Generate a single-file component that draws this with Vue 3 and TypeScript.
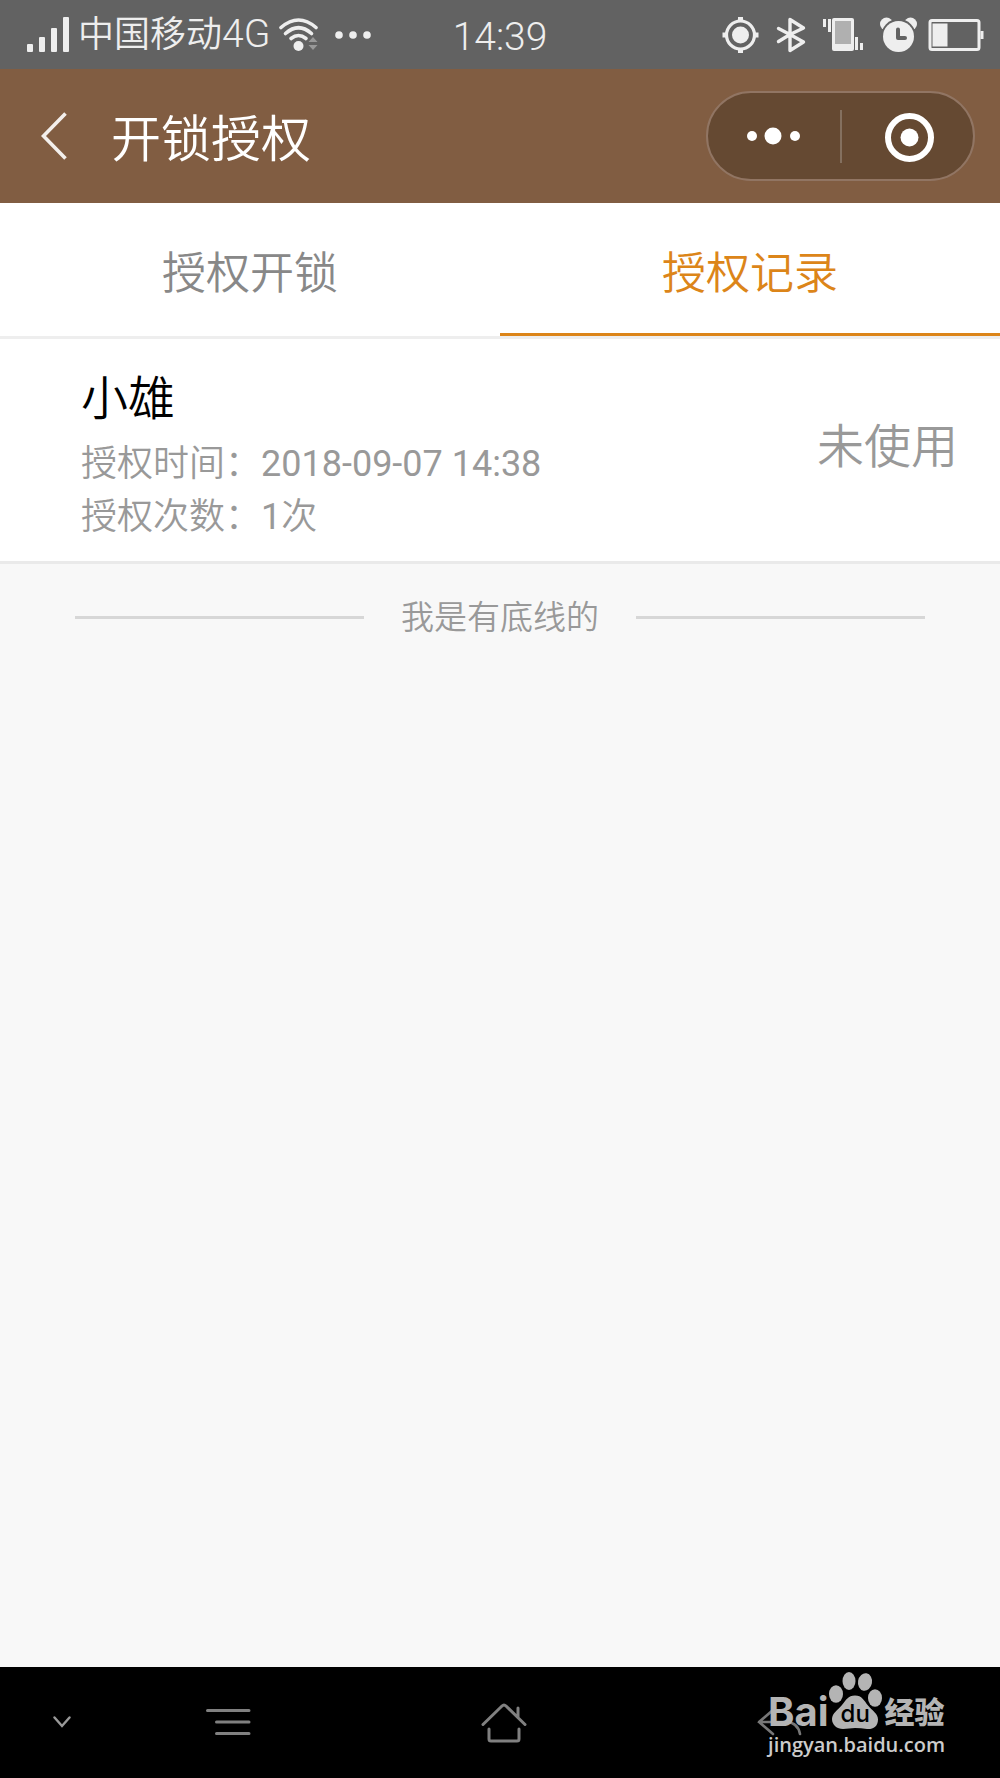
<script setup lang="ts">
import { ref } from 'vue'

interface AuthRecord {
  name: string
  time: string
  count: number
  status: string
}

const tabs: string[] = ['授权开锁', '授权记录']
const activeTab = ref<number>(1)
const records: AuthRecord[] = [
  { name: '小雄', time: '2018-09-07 14:38', count: 1, status: '未使用' },
]
</script>

<template>
  <div class="screen">
    <div class="status-bar">
      <div class="status-left">
        <svg width="44" height="36" viewBox="0 0 44 36" fill="#eee">
          <rect x="1" y="27" width="6" height="8" rx="1" />
          <rect x="13" y="20" width="6" height="15" rx="1" />
          <rect x="25" y="11" width="6" height="24" rx="1" />
          <rect x="37" y="0" width="6" height="35" rx="1" />
        </svg>
        <span class="carrier">中国移动<span class="network">4G</span></span>
        <svg class="wifi" width="40" height="34" viewBox="0 0 40 34" fill="none" stroke="#eee" stroke-width="3.600" stroke-linecap="round">
          <path d="M2 9.500Q19.500 -5.500 37 9.500" />
          <path d="M6.500 15.500Q19.500 4 32.500 15.500" />
          <path d="M12 20.500Q19.500 14.500 27 20.500" />
          <circle cx="19.500" cy="28" r="5" fill="#eee" stroke="none" />
          <path d="M29.500 24l4.500-5 4.500 5zM29.500 27h9l-4.500 5z" fill="#999" stroke="none" />
        </svg>
        <svg width="36" height="36" viewBox="0 0 36 36" fill="#eee">
          <circle cx="4" cy="18" r="3.800" />
          <circle cx="18" cy="18" r="3.800" />
          <circle cx="32" cy="18" r="3.800" />
        </svg>
      </div>
      <time class="clock">14:39</time>
      <div class="status-right">
        <svg width="38" height="36" viewBox="0 0 38 36" fill="#eee">
          <circle cx="18.500" cy="18" r="14" fill="none" stroke="#eee" stroke-width="3.200" />
          <circle cx="18.500" cy="18" r="8.500" />
          <path d="M16 0h5v4h-5zM16 32h5v4h-5zM.5 15.500h4v5h-4zM32.500 15.500h4v5h-4z" />
        </svg>
        <svg width="30" height="36" viewBox="0 0 30 36" fill="none" stroke="#eee" stroke-width="3.400" stroke-linejoin="round" stroke-linecap="round">
          <path d="M2.500 11.500L14 17.500l13.500-6.500L14 2.500v31L27.500 25 14 17.500 2.500 24.500" />
        </svg>
        <svg width="41" height="36" viewBox="0 0 41 36" fill="#eee">
          <rect x="10" y="1" width="22" height="33" rx="2" />
          <rect x="13" y="4" width="16" height="23" fill="#b0b0b0" />
          <path d="M1 2h3v8H1zM6 2h3v13H6zM33 20h3v13h-3zM38 26h3v7h-3z" />
        </svg>
        <svg width="38" height="36" viewBox="0 0 38 36" fill="#eee">
          <circle cx="7.500" cy="7" r="6.500" />
          <circle cx="31.500" cy="7" r="6.500" />
          <circle cx="19.500" cy="19.500" r="17.500" fill="#626262" />
          <circle cx="19.500" cy="19.500" r="15.500" />
          <path d="M19 12.500v8.500h7" fill="none" stroke="#626262" stroke-width="4" stroke-linecap="round" stroke-linejoin="round" />
        </svg>
        <svg width="56" height="32" viewBox="0 0 56 32" fill="#eee">
          <rect x="2" y="1.500" width="49" height="29" rx="2" fill="none" stroke="#eee" stroke-width="3" />
          <rect x="4.500" y="4.500" width="15" height="23" />
          <rect x="52.500" y="12" width="3" height="8" />
        </svg>
      </div>
    </div>

    <header class="app-bar">
      <button class="back" type="button" aria-label="返回">
        <svg width="26" height="48" viewBox="0 0 26 48" fill="none" stroke="#f3efec" stroke-width="3.600">
          <path d="M24.500 1.500L2.500 24l22 22.500" />
        </svg>
      </button>
      <h1>开锁授权</h1>
      <div class="capsule">
        <button type="button" aria-label="更多">
          <svg width="54" height="50" viewBox="0 0 54 50" fill="#fff">
            <circle cx="5" cy="25" r="5" />
            <circle cx="26" cy="25" r="8.500" />
            <circle cx="48" cy="25" r="5" />
          </svg>
        </button>
        <span class="capsule-line"></span>
        <button type="button" aria-label="关闭">
          <svg width="54" height="54" viewBox="0 0 54 54">
            <circle cx="29.500" cy="28.500" r="21.500" fill="none" stroke="#fff" stroke-width="6" />
            <circle cx="29.500" cy="28.500" r="9" fill="#fff" />
          </svg>
        </button>
      </div>
    </header>

    <nav class="tabs">
      <button
        v-for="(tab, i) in tabs"
        :key="tab"
        type="button"
        :class="{ active: activeTab === i }"
        @click="activeTab = i"
      >{{ tab }}</button>
    </nav>

    <main>
      <article v-for="item in records" :key="item.time" class="record">
        <div class="info">
          <h2>{{ item.name }}</h2>
          <p>授权时间：<span class="num">{{ item.time }}</span></p>
          <p>授权次数：<span class="num">{{ item.count }}</span>次</p>
        </div>
        <span class="state">{{ item.status }}</span>
      </article>
      <div class="end"><span>我是有底线的</span></div>
    </main>

    <footer class="nav-bar">
      <button class="hide" type="button" aria-label="收起">
        <svg width="18" height="14" viewBox="0 0 18 14" fill="none" stroke="#999" stroke-width="2.400" stroke-linecap="round">
          <path d="M1.500 1.500L9 10l7.500-8.500" />
        </svg>
      </button>
      <button type="button" aria-label="菜单">
        <svg width="46" height="30" viewBox="0 0 46 30" fill="none" stroke="#808080" stroke-width="3" stroke-linecap="round">
          <path d="M2.500 2.500h41.500M11.500 14h32.500M11.500 25.500h32.500" />
        </svg>
      </button>
      <button type="button" aria-label="主页">
        <svg width="50" height="40" viewBox="0 0 50 40" fill="none" stroke="#808080" stroke-width="3" stroke-linecap="round" stroke-linejoin="round">
          <path d="M4 21.500L23 3q2-2 4 0l19 18.500M39 14V5M10 26v10q0 2 2 2h26q2 0 2-2V26" />
        </svg>
      </button>
      <button type="button" aria-label="后退">
        <svg width="46" height="30" viewBox="0 0 46 30" fill="none" stroke="#777" stroke-width="2.600" stroke-linecap="round">
          <path d="M16 2L2 14l14 12M2 14h28q11 1 13 12" />
        </svg>
      </button>
      <div class="watermark">
        <div class="brand">
          <span class="bai">Bai</span>
          <span class="paw">
            <svg width="54" height="58" viewBox="0 0 54 58" fill="#b4b4b4">
              <ellipse cx="7" cy="22" rx="7" ry="8.800" />
              <ellipse cx="20" cy="9" rx="6.500" ry="9" />
              <ellipse cx="36" cy="10" rx="7" ry="8.800" transform="rotate(10 36 10)" />
              <ellipse cx="46" cy="26" rx="7" ry="8.800" />
              <path d="M26 23.500c7 0 9 5 13 10s10 8 10 14c0 7-5 10-11 9.500-4-.5-8-1-12-1s-8 1-12 1C8 57 3 53 3 47c0-6 6-9 10-14s6-9.500 13-9.500z" />
            </svg>
            <span class="du">du</span>
          </span>
          <span class="exp">经验</span>
        </div>
        <span class="site">jingyan.baidu.com</span>
      </div>
    </footer>
  </div>
</template>

<style>
body {
  margin: 0;
}
</style>

<style scoped>
.screen {
  display: flex;
  flex-direction: column;
  min-height: 100vh;
  background: #f8f8f8;
  font-family: Roboto, "Noto Sans CJK SC", sans-serif;
  font-weight: 350;
}
svg {
  display: block;
  flex: none;
}
button {
  padding: 0;
  border: 0;
  background: none;
  font: inherit;
  color: inherit;
}
h1,
h2,
p {
  margin: 0;
  font-weight: inherit;
}
.status-bar {
  display: grid;
  grid-template-columns: 1fr auto 1fr;
  align-items: center;
  height: 69px;
  background: #626262;
  color: #eee;
}
.status-left {
  display: flex;
  align-items: center;
  padding-left: 26px;
}
.carrier {
  margin: 0 9px 0 8px;
  font-size: 36px;
  line-height: 68px;
}
.network {
  font-size: 39px;
}
.wifi {
  margin-right: 16px;
}
.clock {
  padding-top: 4px;
  font-size: 39px;
  line-height: 44px;
}
.status-right {
  display: flex;
  align-items: center;
  justify-content: flex-end;
  gap: 16px;
  padding-right: 16px;
}
.status-right svg:last-child {
  margin-left: -5px;
}
.app-bar {
  display: flex;
  align-items: center;
  box-sizing: border-box;
  height: 134px;
  padding: 0 25px 0 41px;
  background: #815d42;
  color: #fff;
}
h1 {
  flex: 1;
  margin-left: 44px;
  padding-top: 8px;
  font-size: 50px;
  line-height: 72px;
}
.capsule {
  display: flex;
  align-items: center;
  box-sizing: border-box;
  width: 269px;
  height: 90px;
  border: 2px solid #917563;
  border-radius: 45px;
  background: #654932;
}
.capsule button {
  display: flex;
  flex: 1;
  justify-content: center;
}
.capsule-line {
  width: 2px;
  height: 53px;
  background: #84705f;
}
.tabs {
  display: flex;
  height: 133px;
  border-bottom: 3px solid #eee;
  background: #fff;
  color: #888;
}
.tabs button {
  flex: 1;
  padding-top: 4px;
  border-bottom: 3px solid transparent;
  font-size: 44px;
}
.tabs .active {
  border-bottom-color: #dc8519;
  color: #dc8519;
}
.record {
  display: flex;
  align-items: flex-start;
  justify-content: space-between;
  box-sizing: border-box;
  height: 225px;
  padding: 0 42px 0 81px;
  border-bottom: 3px solid #eaeaea;
  background: #fff;
  color: #999;
}
.info {
  padding-top: 28px;
}
h2 {
  padding-bottom: 7px;
  font-size: 47px;
  line-height: 64px;
  color: #000;
}
p {
  font-size: 36px;
  line-height: 53px;
}
.num {
  font-weight: 400;
}
.state {
  padding-top: 76px;
  font-size: 47px;
  line-height: 64px;
}
.end {
  display: flex;
  align-items: center;
  gap: 37px;
  padding: 29px 75px;
  color: #999;
  font-size: 33px;
  line-height: 49px;
}
.end::before,
.end::after {
  content: "";
  flex: 1;
  height: 3px;
  background: #d7d7d7;
}
.nav-bar {
  position: relative;
  display: flex;
  align-items: center;
  justify-content: space-between;
  box-sizing: border-box;
  height: 111px;
  margin-top: auto;
  padding: 0 197px 0 53px;
  background: #000;
}
.hide {
  margin-right: -94px;
}
.watermark {
  position: absolute;
  top: 5px;
  right: 55px;
  color: #b4b4b4;
}
.brand {
  display: flex;
  align-items: flex-end;
  height: 58px;
}
.bai {
  font: 700 40px/36px Inter, sans-serif;
}
.paw {
  position: relative;
}
.du {
  position: absolute;
  left: 12px;
  bottom: 0;
  color: #000;
  font: 500 24px/32px Inter, sans-serif;
}
.exp {
  margin-left: 2px;
  font: 900 30px/40px "Noto Sans CJK SC", sans-serif;
}
.site {
  display: block;
  color: #ccc;
  font: 600 20px/30px "Open Sans", sans-serif;
}
</style>
